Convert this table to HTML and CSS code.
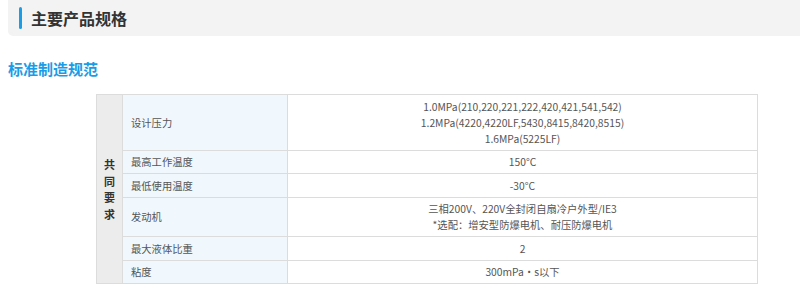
FILE: index.html
```html
<!DOCTYPE html>
<html lang="zh">
<head>
<meta charset="utf-8">
<link rel="stylesheet" href="styles.css">
</head>
<body>
<div class="page">
  <div class="head-box">
    <span class="head-bar"></span>
    <h2 class="head-title">主要产品规格</h2>
  </div>
  <h3 class="sub-title">标准制造规范</h3>
  <table class="spec">
    <colgroup>
      <col class="c-group">
      <col class="c-label">
      <col class="c-value">
    </colgroup>
    <tr>
      <th class="group" rowspan="6">共<br>同<br>要<br>求</th>
      <td class="label">设计压力</td>
      <td class="value">1.0MPa(210,220,221,222,420,421,541,542)<br>1.2MPa(4220,4220LF,5430,8415,8420,8515)<br>1.6MPa(5225LF)</td>
    </tr>
    <tr>
      <td class="label">最高工作温度</td>
      <td class="value">150°C</td>
    </tr>
    <tr>
      <td class="label">最低使用温度</td>
      <td class="value">-30°C</td>
    </tr>
    <tr>
      <td class="label">发动机</td>
      <td class="value">三相200V、220V全封闭自扇冷户外型/IE3<br>*选配：增安型防爆电机、耐压防爆电机</td>
    </tr>
    <tr>
      <td class="label">最大液体比重</td>
      <td class="value">2</td>
    </tr>
    <tr>
      <td class="label">粘度</td>
      <td class="value">300mPa・s以下</td>
    </tr>
  </table>
</div>
</body>
</html>
```

FILE: styles.css
```css
html, body {
  margin: 0;
  padding: 0;
  background: #fff;
  overflow: hidden;
}
.page {
  padding-left: 8px;
  font-family: "Noto Sans CJK SC", "Noto Sans", sans-serif;
  color: #555;
}
.head-box {
  display: flex;
  align-items: center;
  margin-top: -4px;
  margin-right: -12px;
  height: 40px;
  padding-top: 4px;
  box-sizing: border-box;
  background: #f3f3f3;
  border-radius: 5px;
  padding-left: 11px;
}
.head-bar {
  width: 3px;
  height: 22px;
  border-radius: 2px;
  background: #1a9de6;
  margin-right: 9px;
}
.head-title {
  margin: 0;
  font-size: 16px;
  font-weight: 700;
  color: #333;
  line-height: 20px;
}
.sub-title {
  margin: 22px 0 0 0;
  font-size: 15px;
  font-weight: 700;
  color: #1a9de6;
  line-height: 22px;
}
.spec {
  margin: 14px 0 0 88px;
  border-collapse: collapse;
  table-layout: fixed;
  width: 661px;
  font-size: 10.3px;
  line-height: 16px;
  border: 1px solid #dcdcdc;
}
.c-group { width: 26px; }
.c-label { width: 165px; }
.c-value { width: 470px; }
.spec td, .spec th {
  border: 1px solid #dcdcdc;
  padding: 3.5px 0 3px;
}
.group {
  background: #ececec;
  color: #333;
  font-weight: 700;
  font-size: 11px;
  line-height: 16.5px;
  text-align: center;
  vertical-align: middle;
}
.label {
  background: #f0f8fd;
  padding-left: 8px !important;
  text-align: left;
}
.value {
  text-align: center;
  background: #fff;
}
```
